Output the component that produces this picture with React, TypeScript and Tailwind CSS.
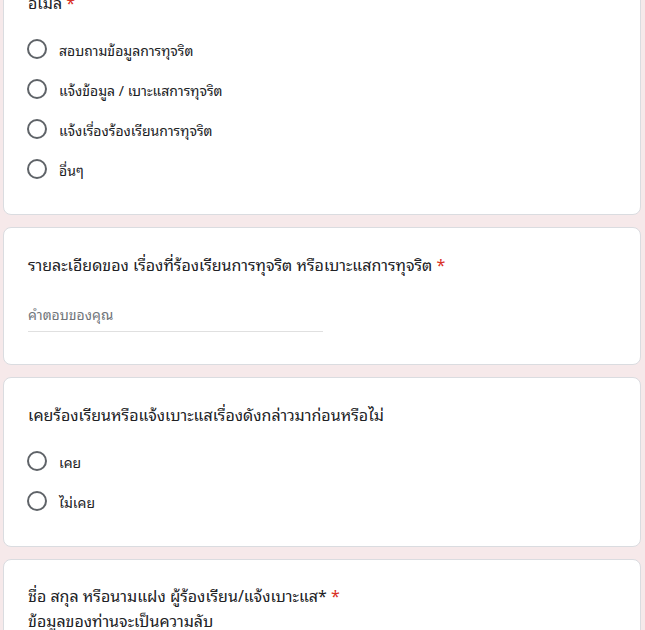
import React from 'react';

const FONT = {
  fontFamily: '"Noto Sans Thai Looped", "Tahoma", "Noto Sans", "Noto Sans Thai", "DejaVu Sans", sans-serif',
};

function Radio({ label }: { label: string }) {
  return (
    <label className="flex h-10 items-center cursor-pointer">
      <span className="-ml-px h-5 w-5 shrink-0 rounded-full border-2 border-[#5f6368]" />
      <span className="ml-3 text-[14px] text-[#202124]">{label}</span>
    </label>
  );
}

function Card({ children, className = '' }: { children: React.ReactNode; className?: string }) {
  return (
    <div className={`rounded-lg border border-[#dadce0] bg-white px-6 pt-6 ${className}`}>
      {children}
    </div>
  );
}

export default function App() {
  return (
    <div className="h-[630px] overflow-hidden bg-[#f6e9ea]" style={FONT}>
      <div className="mx-[3px] flex w-[638px] flex-col gap-3">
        <Card className="-mt-[35px] pb-[25px]">
          <div className="text-[16px] leading-6 text-[#202124]">
            อีเมล <span className="text-[#d93025]">*</span>
          </div>
          <div className="mt-[15px]">
            {['สอบถามข้อมูลการทุจริต', 'แจ้งข้อมูล / เบาะแสการทุจริต', 'แจ้งเรื่องร้องเรียนการทุจริต', 'อื่นๆ'].map((o) => (
              <Radio key={o} label={o} />
            ))}
          </div>
        </Card>

        <Card className="pb-8">
          <div className="text-[16px] leading-6 text-[#202124]">
            รายละเอียดของ เรื่องที่ร้องเรียนการทุจริต หรือเบาะแสการทุจริต <span className="text-[#d93025]">*</span>
          </div>
          <div className="mt-[26px] w-[295px] border-b border-[#e0e0e0] pb-[5px] text-[14px] leading-6 text-[#70757a]">
            คำตอบของคุณ
          </div>
        </Card>

        <Card className="pb-[25px]">
          <div className="text-[16px] leading-6 text-[#202124]">
            เคยร้องเรียนหรือแจ้งเบาะแสเรื่องดังกล่าวมาก่อนหรือไม่
          </div>
          <div className="mt-[15px]">
            <Radio label="เคย" />
            <Radio label="ไม่เคย" />
          </div>
        </Card>

        <Card className="pt-[23px] pb-6">
          <div className="text-[16px] leading-[25px] text-[#202124]">
            ชื่อ สกุล หรือนามแฝง ผู้ร้องเรียน/แจ้งเบาะแส* <span className="text-[#d93025]">*</span>
            <br />
            ข้อมูลของท่านจะเป็นความลับ
          </div>
          <div className="h-24" />
        </Card>
      </div>
    </div>
  );
}
